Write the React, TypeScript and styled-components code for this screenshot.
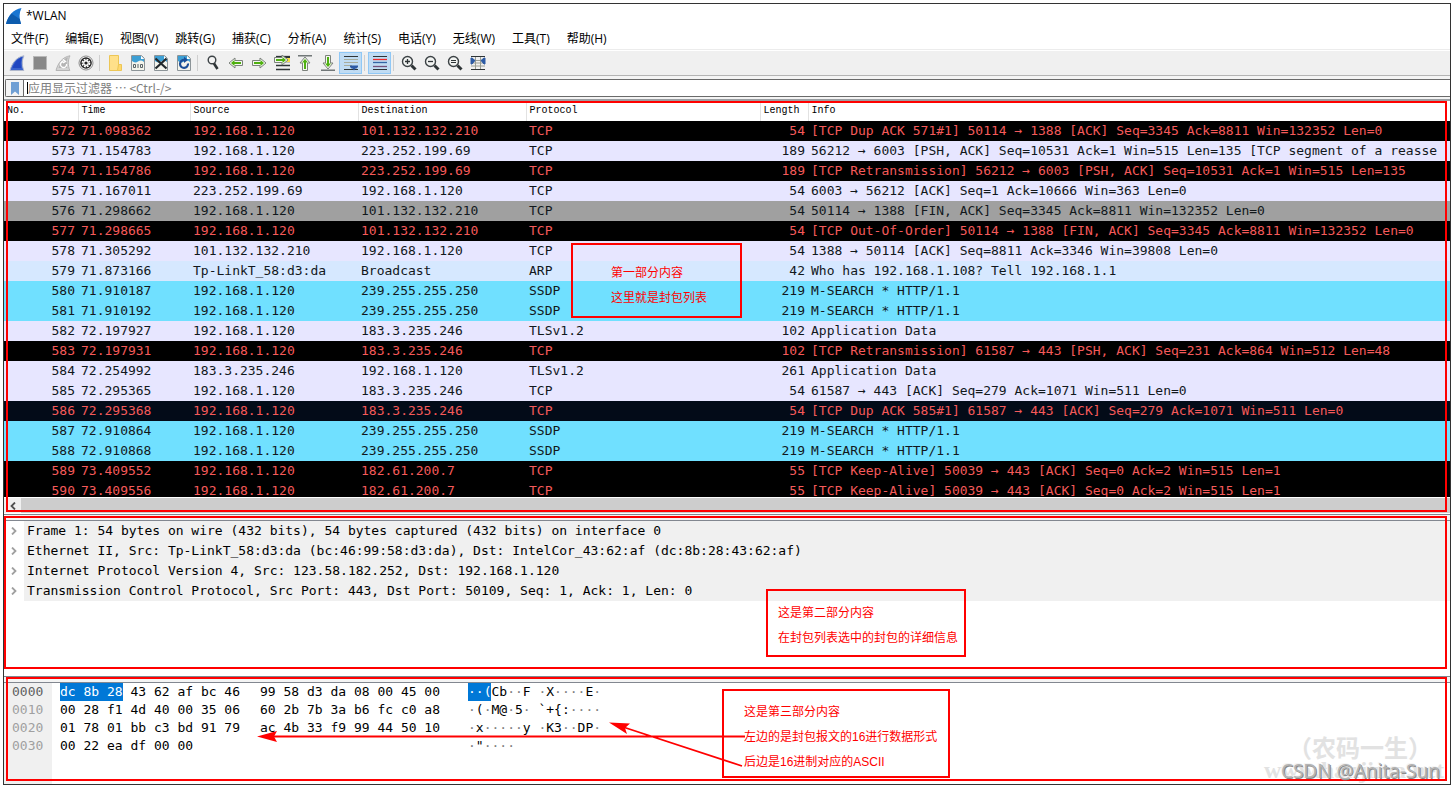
import React from 'react';
import styled, { createGlobalStyle, css } from 'styled-components';

const RED = '#ff0000';
const MONO = '"DejaVu Sans Mono", "Liberation Mono", "Noto Sans CJK SC", monospace';
const UI = '"Open Sans", "Noto Sans CJK SC", sans-serif';
const NOTE = '"Liberation Sans", "Noto Sans CJK SC", sans-serif';

const GlobalStyle = createGlobalStyle`
  * { box-sizing: border-box; }
  body { margin: 0; background: #ffffff; color: #000000; }
  button, input { font: inherit; color: inherit; }
`;

const Page = styled.div`
  padding: 3px 4px 4px 3px;
`;

const Window = styled.main`
  position: relative;
  border: 1px solid #333333;
  background: #ffffff;
  overflow: hidden;
`;

const TitleBar = styled.header`
  display: flex;
  align-items: center;
  gap: 4px;
  height: 24px;
  padding-left: 2px;
  font: 12px/24px ${UI};
`;

const MenuBar = styled.nav`
  display: flex;
  gap: 17px;
  height: 22px;
  padding-left: 7px;
  border-bottom: 1px solid #ececec;
`;

const MenuItem = styled.button`
  border: 0;
  padding: 0;
  background: none;
  font: 12px/22px ${UI};
  white-space: nowrap;
`;

const ToolBar = styled.div`
  display: flex;
  align-items: center;
  height: 25px;
  margin-top: 1px;
  padding: 0 1px;
  background: #f0f0f0;
  border-bottom: 1px solid #b4b4b4;
`;

const ToolButton = styled.button<{ $on?: boolean }>`
  display: flex;
  align-items: center;
  justify-content: center;
  width: 23px;
  height: 22px;
  padding: 0;
  border: 1px solid ${(p) => (p.$on ? '#90c8f6' : 'transparent')};
  background: ${(p) => (p.$on ? '#c0dcf3' : 'transparent')};
`;

const Separator = styled.span`
  width: 6px;
  height: 16px;
  padding-left: 2px;
  &::before {
    content: '';
    display: block;
    width: 1px;
    height: 100%;
    background: #cfcfcf;
  }
`;

const FilterArea = styled.div`
  padding: 3px 0 2px 1px;
  background: #f4f4f4;
  border-bottom: 2px solid #9b9fa3;
`;

const FilterBox = styled.label`
  display: flex;
  align-items: center;
  height: 18px;
  border: 1px solid #6a6a6a;
  border-right: 0;
  border-radius: 2px 0 0 2px;
  background: #ffffff;
`;

const Bookmark = styled.span`
  display: flex;
  align-items: center;
  justify-content: center;
  width: 18px;
  height: 16px;
  border-right: 1px solid #6a6a6a;
  background: #f4f4f4;
`;

const Caret = styled.span`
  width: 1px;
  height: 12px;
  margin-left: 3px;
  background: #000000;
`;

const FilterInput = styled.input`
  flex: 1;
  min-width: 0;
  height: 16px;
  padding: 0;
  border: 0;
  outline: 0;
  background: transparent;
  font: 12px/16px "Noto Sans CJK SC", sans-serif;
  &::placeholder { color: #808080; opacity: 1; }
`;

const Pane = styled.section`
  position: relative;
`;

const Marker = styled.div<{ $left: number; $top: number; $bottom: number }>`
  position: absolute;
  left: ${(p) => p.$left}px;
  right: 3px;
  top: ${(p) => p.$top}px;
  bottom: ${(p) => p.$bottom}px;
  border: 2px solid ${RED};
  pointer-events: none;
`;

const Note = styled.div<{ $left: number; $top: number; $width: number; $pad: string }>`
  position: absolute;
  left: ${(p) => p.$left}px;
  top: ${(p) => p.$top}px;
  width: ${(p) => p.$width}px;
  padding: ${(p) => p.$pad};
  border: 2px solid ${RED};
  color: ${RED};
  font: 12px/25px ${NOTE};
  white-space: nowrap;
`;

const PacketScroll = styled.div`
  height: 396px;
  overflow: hidden;
`;

const PacketTable = styled.table`
  width: 100%;
  table-layout: fixed;
  border-collapse: collapse;
  font: 13px/20px ${MONO};
  th, td {
    height: 20px;
    padding: 0 0 0 3px;
    overflow: hidden;
    white-space: pre;
    text-align: left;
  }
  th {
    font: 10px/20px "Liberation Mono", monospace;
    border-right: 1px solid #e2e2e2;
  }
  th:last-child { border-right: 0; }
`;

type Tone = 'bad' | 'tcp' | 'fin' | 'arp' | 'udp' | 'cur';

const tones: Record<Tone, [string, string]> = {
  bad: ['#000000', '#f55a5a'],
  tcp: ['#e7e6ff', '#12181c'],
  fin: ['#a0a0a0', '#12181c'],
  arp: ['#d6e8ff', '#12181c'],
  udp: ['#70e0ff', '#12181c'],
  cur: ['#030b18', '#f55a5a'],
};

const PacketRow = styled.tr<{ $tone: Tone }>`
  background: ${(p) => tones[p.$tone][0]};
  color: ${(p) => tones[p.$tone][1]};
  td:nth-child(1), td:nth-child(6) {
    padding: 0 3px 0 0;
    text-align: right;
  }
`;

const ScrollBar = styled.div`
  display: flex;
  align-items: center;
  height: 16px;
  margin-bottom: 1px;
  border-top: 1px solid #ffffff;
  background: #f0f0f0;
`;

const ScrollArrow = styled.button`
  display: flex;
  align-items: center;
  justify-content: center;
  width: 17px;
  height: 15px;
  padding: 0;
  border: 0;
  background: #f0f0f0;
`;

const ScrollThumb = styled.div`
  flex: 1;
  height: 15px;
  background: #cdcdcd;
`;

const Splitter = styled.div`
  height: 7px;
  border: solid #828790;
  border-width: 1px 0;
  background: #f4f4f4;
`;

const DetailTree = styled.ul`
  height: 155px;
  margin: 0;
  padding: 0;
  list-style: none;
  font: 13px/20px ${MONO};
`;

const DetailRow = styled.li`
  display: flex;
  height: 20px;
  white-space: pre;
`;

const Expander = styled.button`
  display: flex;
  align-items: center;
  justify-content: center;
  width: 20px;
  padding: 0;
  border: 0;
  background: #ffffff;
`;

const DetailText = styled.span`
  flex: 1;
  padding-left: 3px;
  background: #f0f0f0;
`;

const HexView = styled.div`
  display: flex;
  height: 101px;
  font: 13px/18px ${MONO};
  white-space: pre;
`;

const Offsets = styled.div`
  width: 48px;
  padding-left: 8px;
  background: #f0f0f0;
  color: #a0a0a0;
  div:first-child { color: #606060; }
`;

const HexBytes = styled.div`
  width: 416px;
  padding-left: 8px;
`;

const HexLine = styled.div`
  display: grid;
  grid-template-columns: 200px 208px;
  height: 18px;
`;

const Selected = styled.span`
  display: inline-block;
  height: 18px;
  background: #0078d7;
  color: #ffffff;
`;

const Dot = styled.span`
  color: #808080;
  ${Selected} & { color: #ffffff; }
`;

const Arrows = styled.svg`
  position: absolute;
  left: 253px;
  top: 35px;
  width: 490px;
  height: 60px;
  pointer-events: none;
`;

const watermark = css`
  position: absolute;
  white-space: nowrap;
  pointer-events: none;
`;

const BrandMark = styled.div`
  ${watermark}
  right: 18px;
  bottom: 24px;
  color: #e2e2e2;
  font: 700 24px/26px "Noto Sans CJK SC", serif;
`;

const SiteMark = styled.div`
  ${watermark}
  right: 6px;
  bottom: 0;
  color: #e2e2e2;
  font: 700 24px/28px "Liberation Serif", serif;
`;

const AuthorMark = styled.div`
  ${watermark}
  right: 10px;
  bottom: 0;
  color: #b4b4b4;
  text-shadow: 1px 1px 0 #8a8a8a, -1px -1px 0 #f4f4f4;
  font: 19px/26px "Noto Sans", sans-serif;
`;

const Fin = ({ top, low, edge }: { top: string; low: string; edge: string }) => (
  <>
    <path d="M1 15.500C3 8 7.500 2 15 .800C12.800 5 12.800 10.500 14.800 15.500Z" fill={low} stroke={edge} strokeWidth="1" />
    <path d="M3.500 13C5.500 7.500 9 3.500 13 2.200C11.500 6 11.500 9.500 12.200 13Z" fill={top} />
  </>
);

const Sheet = ({ children }: { children: React.ReactNode }) => (
  <>
    <path d="M1.500 .500H11.500L14.500 3.500V15.500H1.500Z" fill="#f4f4ec" stroke="#8c9498" />
    <path d="M2 1H11L14 4V7Q11 4.500 8 6.500T2 6Z" fill="#3d9fd4" />
    <path d="M11 1V4H14Z" fill="#ffffff" />
    {children}
  </>
);

const Lines = () => (
  <path d="M8 2.500H16M8 6.500H16M2 10.500H16M2 14.500H16" stroke="#2e3436" strokeWidth="1.300" fill="none" />
);

const Arrow = ({ turn = 0 }: { turn?: number }) => (
  <g transform={`rotate(${turn} 8 8)`}>
    <path d="M1 8L7 3V5.500H14.500V10.500H7V13Z" fill="#f4f8f0" stroke="#7c827c" strokeWidth="1" />
    <path d="M3 8L6.500 5V7H13V9H6.500V11Z" fill="#4fb010" />
  </g>
);

const Lens = ({ children }: { children?: React.ReactNode }) => (
  <>
    <circle cx="6.500" cy="6.500" r="5" fill="#f2f4f2" stroke="#3c4245" strokeWidth="1.400" />
    <path d="M10.500 10.500L14.500 14.500" stroke="#2e3436" strokeWidth="3" />
    {children}
  </>
);

const icons: Record<string, React.ReactNode> = {
  start: <Fin top="#2046c0" low="#3a62cc" edge="#b0b8cc" />,
  stop: <rect x="1.500" y="1.500" width="13" height="13" fill="#888888" stroke="#b8b8b8" />,
  restart: (
    <>
      <Fin top="#b4b4b4" low="#d4d4d4" edge="#b4b4b4" />
      <path d="M8.500 6.500A3 3 0 1 0 11.500 9M8 4.500L10.500 6.500L8 8" stroke="#ffffff" strokeWidth="1.300" fill="none" />
    </>
  ),
  options: (
    <>
      <circle cx="8" cy="8" r="7" fill="#ffffff" stroke="#8a8a8a" />
      <circle cx="8" cy="8" r="5.800" fill="#222222" />
      <circle cx="8" cy="8" r="3.600" fill="none" stroke="#ffffff" strokeWidth="1.600" strokeDasharray="1.900 0.930" />
      <circle cx="8" cy="8" r="2.900" fill="#ffffff" />
      <circle cx="8" cy="8" r="1.600" fill="#222222" />
    </>
  ),
  open: (
    <>
      <path d="M2.500 .500H11.500V15.500H2.500Z" fill="#ffe08a" stroke="#ecc656" />
      <path d="M11.500 9.500H14.500V15.500H10.500Z" fill="#ffd86c" stroke="#ecc656" />
    </>
  ),
  save: (
    <Sheet>
      <path d="M3.500 9.500H5.500V12.500H3.500ZM8 9V13M10.500 9.500H12.500V12.500H10.500Z" stroke="#5a6468" fill="none" />
    </Sheet>
  ),
  close: (
    <Sheet>
      <path d="M2.500 3.500L13.500 13.500M13.500 3.500L2.500 13.500" stroke="#22282c" strokeWidth="2.200" />
    </Sheet>
  ),
  reload: (
    <Sheet>
      <path d="M12 8.500A4 4 0 1 1 8.500 5" stroke="#1c4f98" strokeWidth="2.200" fill="none" />
      <path d="M8 1.800L12 5L8 8Z" fill="#1c4f98" />
    </Sheet>
  ),
  find: (
    <>
      <circle cx="7" cy="5" r="3.800" fill="#f4f4f4" stroke="#3c4245" strokeWidth="1.400" />
      <path d="M9 8.500L12.500 14" stroke="#2e3436" strokeWidth="2.600" />
    </>
  ),
  back: <Arrow />,
  forward: <Arrow turn={180} />,
  goto: (
    <>
      <Lines />
      <path d="M2 1.500H16" stroke="#2e3436" strokeWidth="1.300" />
      <rect x="12" y="3" width="4" height="4" fill="#f6dc4a" />
      <g transform="translate(-1 -3)"><Arrow turn={180} /></g>
    </>
  ),
  first: (
    <>
      <path d="M1 .800H15" stroke="#5c6264" strokeWidth="1.300" />
      <g transform="translate(0 1)"><Arrow turn={90} /></g>
    </>
  ),
  last: (
    <>
      <path d="M1 15.200H15" stroke="#5c6264" strokeWidth="1.300" />
      <g transform="translate(0 -1)"><Arrow turn={270} /></g>
    </>
  ),
  follow: (
    <>
      <path d="M1 1.500H15M1 14.500H15" stroke="#2e3436" strokeWidth="1.200" />
      <path d="M1 4.500H15M1 7.500H15M1 10.500H9" stroke="#a8ac9c" strokeWidth="1.200" />
      <path d="M7 10.500H15V12L13.500 13.500H12.500L11 15.500L9.500 13.500H8.500L7 12Z" fill="#2c5aa4" />
    </>
  ),
  colorize: (
    <>
      <path d="M1 1.500H15M1 14.500H15" stroke="#2e3436" strokeWidth="1.200" />
      <path d="M1 4.500H15" stroke="#ef2929" strokeWidth="1.300" />
      <path d="M1 7.500H15" stroke="#3465a4" strokeWidth="1.300" />
      <path d="M1 11.500H15" stroke="#75507b" strokeWidth="1.300" />
    </>
  ),
  zoomin: <Lens><path d="M4 6.500H9M6.500 4V9" stroke="#2e3436" strokeWidth="1.300" /></Lens>,
  zoomout: <Lens><path d="M4 6.500H9" stroke="#2e3436" strokeWidth="1.300" /></Lens>,
  zoomone: <Lens><path d="M4 5.500H9M4 7.500H9" stroke="#2e3436" strokeWidth="1.200" /></Lens>,
  resize: (
    <>
      <path d="M1 5.500H15M1 8H15M1 11H15M5.500 1V15M10.500 1V15" stroke="#9a9e94" strokeWidth="1" />
      <path d="M1 1.500H15M1 14.500H15" stroke="#2e3436" strokeWidth="1.200" />
      <path d="M1 3H2L5 5.500L2 9H1ZM15 3H14L11 5.500L14 9H15Z" fill="#2c5aa4" stroke="#2c5aa4" />
    </>
  ),
};

const toolGroups: [string, string][][] = [
  [['start', '开始捕获'], ['stop', '停止捕获'], ['restart', '重新捕获'], ['options', '捕获选项']],
  [['open', '打开'], ['save', '保存'], ['close', '关闭'], ['reload', '重新加载']],
  [['find', '查找'], ['back', '后退'], ['forward', '前进'], ['goto', '转到分组'], ['first', '首个分组'], ['last', '最新分组'], ['follow', '自动滚动']],
  [['colorize', '着色']],
  [['zoomin', '放大'], ['zoomout', '缩小'], ['zoomone', '普通大小'], ['resize', '调整列宽']],
];

const menus = ['文件(F)', '编辑(E)', '视图(V)', '跳转(G)', '捕获(C)', '分析(A)', '统计(S)', '电话(Y)', '无线(W)', '工具(T)', '帮助(H)'];

const columns: [string, number | undefined][] = [
  ['No.', 74], ['Time', 112], ['Source', 168], ['Destination', 168], ['Protocol', 234], ['Length', 48], ['Info', undefined],
];

const ME = '192.168.1.120';

const packets: [Tone, string, string, string, string, string, string, string][] = [
  ['bad', '572', '71.098362', ME, '101.132.132.210', 'TCP', '54', '[TCP Dup ACK 571#1] 50114 → 1388 [ACK] Seq=3345 Ack=8811 Win=132352 Len=0'],
  ['tcp', '573', '71.154783', ME, '223.252.199.69', 'TCP', '189', '56212 → 6003 [PSH, ACK] Seq=10531 Ack=1 Win=515 Len=135 [TCP segment of a reasse'],
  ['bad', '574', '71.154786', ME, '223.252.199.69', 'TCP', '189', '[TCP Retransmission] 56212 → 6003 [PSH, ACK] Seq=10531 Ack=1 Win=515 Len=135'],
  ['tcp', '575', '71.167011', '223.252.199.69', ME, 'TCP', '54', '6003 → 56212 [ACK] Seq=1 Ack=10666 Win=363 Len=0'],
  ['fin', '576', '71.298662', ME, '101.132.132.210', 'TCP', '54', '50114 → 1388 [FIN, ACK] Seq=3345 Ack=8811 Win=132352 Len=0'],
  ['bad', '577', '71.298665', ME, '101.132.132.210', 'TCP', '54', '[TCP Out-Of-Order] 50114 → 1388 [FIN, ACK] Seq=3345 Ack=8811 Win=132352 Len=0'],
  ['tcp', '578', '71.305292', '101.132.132.210', ME, 'TCP', '54', '1388 → 50114 [ACK] Seq=8811 Ack=3346 Win=39808 Len=0'],
  ['arp', '579', '71.873166', 'Tp-LinkT_58:d3:da', 'Broadcast', 'ARP', '42', 'Who has 192.168.1.108? Tell 192.168.1.1'],
  ['udp', '580', '71.910187', ME, '239.255.255.250', 'SSDP', '219', 'M-SEARCH * HTTP/1.1 '],
  ['udp', '581', '71.910192', ME, '239.255.255.250', 'SSDP', '219', 'M-SEARCH * HTTP/1.1 '],
  ['tcp', '582', '72.197927', ME, '183.3.235.246', 'TLSv1.2', '102', 'Application Data'],
  ['bad', '583', '72.197931', ME, '183.3.235.246', 'TCP', '102', '[TCP Retransmission] 61587 → 443 [PSH, ACK] Seq=231 Ack=864 Win=512 Len=48'],
  ['tcp', '584', '72.254992', '183.3.235.246', ME, 'TLSv1.2', '261', 'Application Data'],
  ['tcp', '585', '72.295365', ME, '183.3.235.246', 'TCP', '54', '61587 → 443 [ACK] Seq=279 Ack=1071 Win=511 Len=0'],
  ['cur', '586', '72.295368', ME, '183.3.235.246', 'TCP', '54', '[TCP Dup ACK 585#1] 61587 → 443 [ACK] Seq=279 Ack=1071 Win=511 Len=0'],
  ['udp', '587', '72.910864', ME, '239.255.255.250', 'SSDP', '219', 'M-SEARCH * HTTP/1.1 '],
  ['udp', '588', '72.910868', ME, '239.255.255.250', 'SSDP', '219', 'M-SEARCH * HTTP/1.1 '],
  ['bad', '589', '73.409552', ME, '182.61.200.7', 'TCP', '55', '[TCP Keep-Alive] 50039 → 443 [ACK] Seq=0 Ack=2 Win=515 Len=1'],
  ['bad', '590', '73.409556', ME, '182.61.200.7', 'TCP', '55', '[TCP Keep-Alive] 50039 → 443 [ACK] Seq=0 Ack=2 Win=515 Len=1'],
];

const details = [
  'Frame 1: 54 bytes on wire (432 bits), 54 bytes captured (432 bits) on interface 0',
  'Ethernet II, Src: Tp-LinkT_58:d3:da (bc:46:99:58:d3:da), Dst: IntelCor_43:62:af (dc:8b:28:43:62:af)',
  'Internet Protocol Version 4, Src: 123.58.182.252, Dst: 192.168.1.120',
  'Transmission Control Protocol, Src Port: 443, Dst Port: 50109, Seq: 1, Ack: 1, Len: 0',
];

// Each line: offset, selected bytes, rest of the first eight, last eight, selected text, remaining text.
const hexLines = [
  ['0000', 'dc 8b 28', ' 43 62 af bc 46', '99 58 d3 da 08 00 45 00', '··(', 'Cb··F ·X····E·'],
  ['0010', '', '00 28 f1 4d 40 00 35 06', '60 2b 7b 3a b6 fc c0 a8', '', '·(·M@·5· `+{:····'],
  ['0020', '', '01 78 01 bb c3 bd 91 79', 'ac 4b 33 f9 99 44 50 10', '', '·x·····y ·K3··DP·'],
  ['0030', '', '00 22 ea df 00 00', '', '', '·"····'],
];

const Printable = ({ text }: { text: string }) => (
  <>
    {text.split(/(·+)/).map((part, i) => (part.startsWith('·') ? <Dot key={i}>{part}</Dot> : part))}
  </>
);

export default function App() {
  return (
    <Page>
      <GlobalStyle />
      <Window>
        <TitleBar>
          <svg width="16" height="16" viewBox="0 0 16 16" aria-hidden="true">
            <path d="M0 16C2 8 7 1.500 15.500 0C13 5 13 10.500 15 16Z" fill="#1976d2" />
            <path d="M0 16C1 12 3 8 5.500 5.500C9 8 12 10 13.800 11L15 16Z" fill="#0d5cae" />
          </svg>
          <span>*WLAN</span>
        </TitleBar>
        <MenuBar>
          {menus.map((m) => <MenuItem key={m}>{m}</MenuItem>)}
        </MenuBar>
        <ToolBar>
          {toolGroups.map((group, g) => (
            <React.Fragment key={g}>
              {g > 0 && <Separator />}
              {group.map(([id, label]) => (
                <ToolButton key={id} aria-label={label} $on={id === 'follow' || id === 'colorize'}>
                  <svg width="16" height="16" viewBox="0 0 16 16" aria-hidden="true">{icons[id]}</svg>
                </ToolButton>
              ))}
            </React.Fragment>
          ))}
        </ToolBar>
        <FilterArea>
          <FilterBox>
            <Bookmark>
              <svg width="8" height="13" viewBox="0 0 8 13" aria-hidden="true">
                <path d="M0 0H8V13L4 9.500L0 13Z" fill="#6f9fd4" />
              </svg>
            </Bookmark>
            <Caret />
            <FilterInput aria-label="显示过滤器" placeholder="应用显示过滤器 ⋯ <Ctrl-/>" />
          </FilterBox>
        </FilterArea>

        <Pane>
          <PacketScroll>
            <PacketTable>
              <colgroup>
                {columns.map(([name, width]) => <col key={name} width={width} />)}
              </colgroup>
              <thead>
                <tr>{columns.map(([name]) => <th key={name}>{name}</th>)}</tr>
              </thead>
              <tbody>
                {packets.map(([tone, ...cells]) => (
                  <PacketRow key={cells[0]} $tone={tone}>
                    {cells.map((cell, i) => <td key={i}>{cell}</td>)}
                  </PacketRow>
                ))}
              </tbody>
            </PacketTable>
          </PacketScroll>
          <ScrollBar>
            <ScrollArrow aria-label="向左滚动">
              <svg width="6" height="8" viewBox="0 0 6 8" aria-hidden="true">
                <path d="M5 .500L1.500 4L5 7.500" fill="none" stroke="#505050" strokeWidth="1.800" />
              </svg>
            </ScrollArrow>
            <ScrollThumb />
          </ScrollBar>
          <Marker $left={2} $top={0} $bottom={1} />
          <Note $left={567} $top={142} $width={171} $pad="16px 0 5px 38px">
            第一部分内容<br />这里就是封包列表
          </Note>
        </Pane>

        <Splitter />

        <Pane>
          <DetailTree>
            {details.map((line) => (
              <DetailRow key={line}>
                <Expander aria-label="展开">
                  <svg width="6" height="8" viewBox="0 0 6 8" aria-hidden="true">
                    <path d="M1 .500L4.500 4L1 7.500" fill="none" stroke="#a0a0a0" strokeWidth="1.800" />
                  </svg>
                </Expander>
                <DetailText>{line}</DetailText>
              </DetailRow>
            ))}
          </DetailTree>
          <Marker $left={0} $top={-5} $bottom={7} />
          <Note $left={762} $top={68} $width={200} $pad="10px 0 4px 10px">
            这是第二部分内容<br />在封包列表选中的封包的详细信息
          </Note>
        </Pane>

        <Splitter />

        <Pane>
          <HexView>
            <Offsets>
              {hexLines.map(([offset]) => <div key={offset}>{offset}</div>)}
            </Offsets>
            <HexBytes>
              {hexLines.map(([offset, picked, first, second]) => (
                <HexLine key={offset}>
                  <span>{picked && <Selected>{picked}</Selected>}{first}</span>
                  <span>{second}</span>
                </HexLine>
              ))}
            </HexBytes>
            <div>
              {hexLines.map(([offset, , , , picked, rest]) => (
                <div key={offset}>
                  {picked && <Selected><Printable text={picked} /></Selected>}
                  <Printable text={rest} />
                </div>
              ))}
            </div>
          </HexView>
          <BrandMark>（农码一生）</BrandMark>
          <SiteMark>www.hanjima.net</SiteMark>
          <Marker $left={2} $top={-6} $bottom={3} />
          <AuthorMark>CSDN @Anita-Sun</AuthorMark>
          <Note $left={718} $top={6} $width={228} $pad="9px 0 1px 20px">
            这是第三部分内容<br />左边的是封包报文的16进行数据形式<br />后边是16进制对应的ASCII
          </Note>
          <Arrows viewBox="0 0 490 60" aria-hidden="true">
            <path d="M15 18.500H488M366 9L485 48" stroke={RED} strokeWidth="1.800" fill="none" />
            <path d="M0 18.500L20 13L17 18.500L20 24Z" fill={RED} />
            <path d="M352 4.500L373 5.500L368 10L370 16Z" fill={RED} />
          </Arrows>
        </Pane>
      </Window>
    </Page>
  );
}
